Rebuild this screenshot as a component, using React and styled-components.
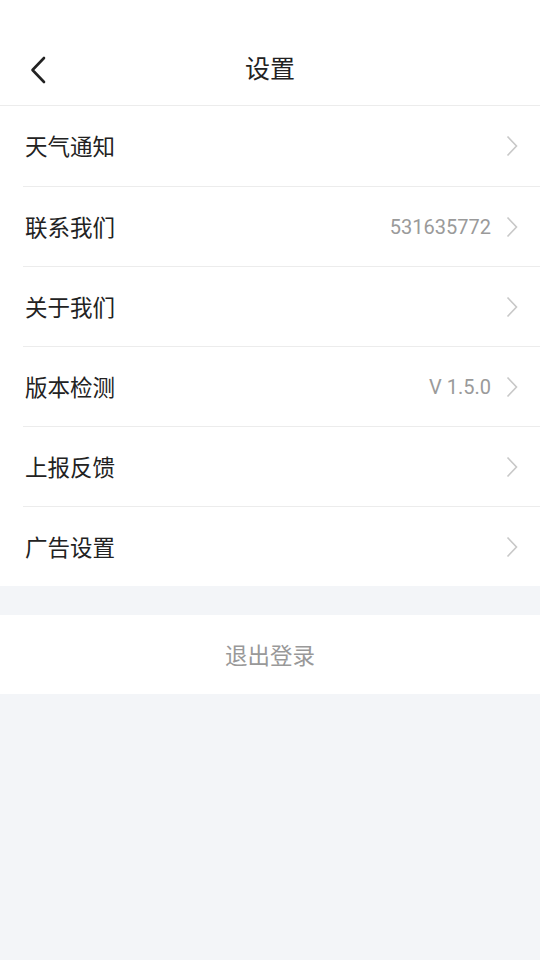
import React from 'react';
import styled, { createGlobalStyle } from 'styled-components';

const GlobalStyle = createGlobalStyle`
  html, body {
    margin: 0;
    padding: 0;
    background: #f3f5f8;
    font-family: "Noto Sans CJK SC", Roboto, "Noto Sans", sans-serif;
  }
`;

const Page = styled.div`
  width: 540px;
  min-height: 960px;
  background: #f3f5f8;
`;

const Header = styled.div`
  position: relative;
  height: 106px;
  padding-top: 32px;
  box-sizing: border-box;
  background: #fff;
  border-bottom: 1px solid #ececec;
  display: flex;
  align-items: center;
  justify-content: center;
`;

const Back = styled.button`
  position: absolute;
  left: 22px;
  top: 46px;
  width: 32px;
  height: 48px;
  padding: 0;
  border: none;
  background: none;
  display: flex;
  align-items: center;
  justify-content: center;
`;

const Title = styled.h1`
  margin: -4px 0 0;
  font-size: 25px;
  font-weight: 400;
  color: #222;
`;

const List = styled.ul`
  list-style: none;
  margin: 0;
  padding: 0 0 0 23px;
  background: #fff;
`;

const Item = styled.li`
  height: 80px;
  display: flex;
  align-items: center;
  padding-right: 22px;
  border-top: ${(p) => (p.first ? 'none' : '1px solid #ececec')};
  box-sizing: border-box;
`;

const Label = styled.span`
  flex: 1;
  font-size: 22.5px;
  color: #222;
  padding-left: 2px;
  margin-top: -2px;
`;

const Value = styled.span`
  font-family: Roboto, "Noto Sans", sans-serif;
  font-size: 20px;
  color: #9a9a9a;
  margin-right: 15px;
`;

const Logout = styled.button`
  display: block;
  width: 100%;
  height: 79px;
  margin-top: 29px;
  border: none;
  background: #fff;
  font-family: "Noto Sans CJK SC", sans-serif;
  font-size: 22.5px;
  color: #999;
  padding-bottom: 2px;
`;

const Chevron = () => (
  <svg width="12" height="22" viewBox="0 0 12 22">
    <path d="M1.5 1.5 L10.5 11 L1.5 20.5" fill="none" stroke="#c8c8c8" strokeWidth="1.6" />
  </svg>
);

const items = [
  { label: '天气通知' },
  { label: '联系我们', value: '531635772' },
  { label: '关于我们' },
  { label: '版本检测', value: 'V 1.5.0' },
  { label: '上报反馈' },
  { label: '广告设置' },
];

export default function App() {
  return (
    <Page>
      <GlobalStyle />
      <Header>
        <Back>
          <svg width="18" height="28" viewBox="0 0 18 28">
            <path d="M15 2 L3.5 14 L15 26" fill="none" stroke="#222" strokeWidth="2.6" strokeLinecap="round" strokeLinejoin="round" />
          </svg>
        </Back>
        <Title>设置</Title>
      </Header>
      <List>
        {items.map((it, i) => (
          <Item key={it.label} first={i === 0}>
            <Label>{it.label}</Label>
            {it.value && <Value>{it.value}</Value>}
            <Chevron />
          </Item>
        ))}
      </List>
      <Logout>退出登录</Logout>
    </Page>
  );
}
